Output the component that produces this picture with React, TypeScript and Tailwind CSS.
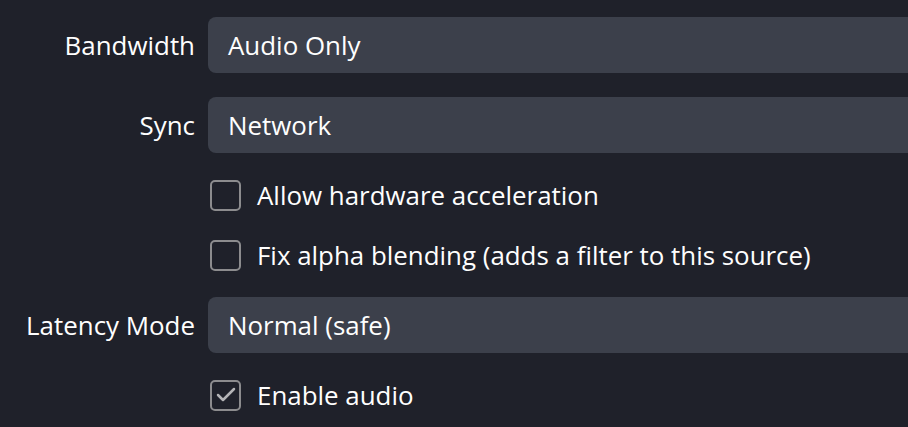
import { Check } from "lucide-react";

type Row =
  | { kind: "select"; label: string; value: string }
  | { kind: "check"; label: string; checked: boolean };

const rows: Row[] = [
  { kind: "select", label: "Bandwidth", value: "Audio Only" },
  { kind: "select", label: "Sync", value: "Network" },
  { kind: "check", label: "Allow hardware acceleration", checked: false },
  { kind: "check", label: "Fix alpha blending (adds a filter to this source)", checked: false },
  { kind: "select", label: "Latency Mode", value: "Normal (safe)" },
  { kind: "check", label: "Enable audio", checked: true },
];

const CheckBox = ({ checked }: { checked: boolean }) => (
  <div className="w-[31px] h-[31px] rounded-[5px] border-2 border-[#8c8c8e] flex items-center justify-center shrink-0">
    {checked && <Check size={24} strokeWidth={2.5} className="text-[#b4b4b6]" />}
  </div>
);

export default function App() {
  return (
    <div
      className="w-[908px] h-[427px] overflow-hidden bg-[#1f212a] text-[#fefefe] text-[25.9px]"
      style={{ fontFamily: '"Open Sans", "Noto Sans", sans-serif' }}
    >
      <div className="grid grid-cols-[196px_760px] gap-x-3 gap-y-6 pt-[17px]">
        {rows.map((row) =>
          row.kind === "select" ? (
            <div key={row.label} className="contents">
              <div className="flex items-center justify-end h-14 pr-[1px]">{row.label}</div>
              <div className="h-14 rounded-lg bg-[#3c404b] flex items-center pl-5">
                {row.value}
              </div>
            </div>
          ) : (
            <div key={row.label} className="contents">
              <div />
              <div className="h-9 flex items-center gap-4 pl-[2px]">
                <CheckBox checked={row.checked} />
                <span>{row.label}</span>
              </div>
            </div>
          )
        )}
      </div>
    </div>
  );
}
